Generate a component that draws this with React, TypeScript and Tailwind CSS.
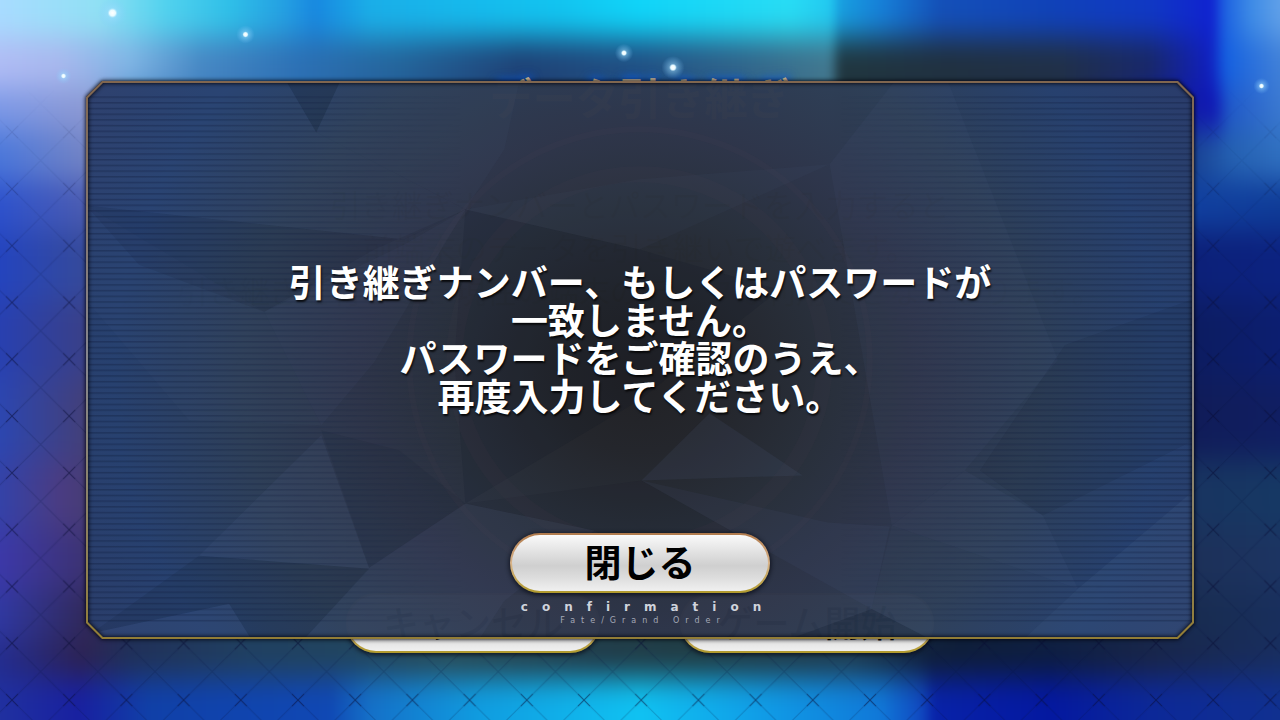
import React from "react";

type Band = { y: number; h: number; stops: [number, string][] };

const bands: Band[] = [
  { y: -60, h: 98, stops: [[0, "#a8dcff"], [100, "#90e0f4"], [165, "#52d2ee"], [230, "#2fbfe8"], [285, "#249fe2"], [315, "#1888e0"], [370, "#1aaee8"], [560, "#12c4f0"], [640, "#10d4f8"], [790, "#28dcf4"], [832, "#22c8f0"], [838, "#18a0e0"], [880, "#1680d8"], [940, "#1450b8"], [1050, "#1042b8"], [1150, "#1038c4"], [1212, "#1022d0"], [1224, "#1c60e0"], [1250, "#3c8ae6"], [1280, "#60a0e8"]] },
  { y: 38, h: 50, stops: [[0, "#b0bcf4"], [60, "#a8b8ee"], [130, "#80b4e4"], [200, "#4888c4"], [300, "#2c70b4"], [400, "#24649a"], [520, "#1e4276"], [640, "#205084"], [740, "#30648a"], [830, "#42788f"], [840, "#20363f"], [950, "#203040"], [1060, "#203048"], [1150, "#182868"], [1210, "#1020c0"], [1226, "#1460e0"], [1280, "#4080d8"]] },
  { y: 88, h: 42, stops: [[0, "#7c98e6"], [90, "#8c98d2"], [130, "#4888c4"], [300, "#2c70b4"], [520, "#1e4276"], [740, "#30648a"], [830, "#42788f"], [840, "#20363f"], [1060, "#203048"], [1190, "#1018a8"], [1214, "#1018b4"], [1230, "#2058c8"], [1280, "#3a78d0"]] },
  { y: 130, h: 50, stops: [[0, "#4c78da"], [90, "#7484c4"], [1190, "#184090"], [1230, "#2460b0"], [1280, "#3070c0"]] },
  { y: 180, h: 50, stops: [[0, "#2e52cc"], [90, "#4c5cb0"], [1190, "#1040a0"], [1280, "#0f3c98"]] },
  { y: 230, h: 70, stops: [[0, "#2444be"], [90, "#364a98"], [1190, "#0c2078"], [1280, "#0c2280"]] },
  { y: 300, h: 80, stops: [[0, "#2840b0"], [90, "#3a4086"], [1190, "#0c1c60"], [1280, "#0c1e70"]] },
  { y: 380, h: 80, stops: [[0, "#2c46b0"], [90, "#443f76"], [1190, "#101c58"], [1280, "#101e62"]] },
  { y: 460, h: 70, stops: [[0, "#3442a8"], [60, "#4a3c82"], [90, "#463c74"], [1190, "#183460"], [1280, "#163864"]] },
  { y: 530, h: 60, stops: [[0, "#3c38a8"], [90, "#3c3270"], [1190, "#1c3058"], [1280, "#1c3462"]] },
  { y: 590, h: 50, stops: [[0, "#3038a0"], [90, "#302858"], [130, "#203058"], [250, "#204060"], [450, "#284c58"], [700, "#203c44"], [850, "#1f3c50"], [960, "#0f1e38"], [1190, "#182c50"], [1280, "#182e5c"]] },
  { y: 640, h: 38, stops: [[0, "#242c8c"], [80, "#2c2252"], [130, "#203058"], [250, "#204060"], [350, "#204460"], [450, "#284c58"], [600, "#203a48"], [700, "#203c44"], [850, "#1f3c50"], [930, "#0f1e38"], [1050, "#0c1c40"], [1150, "#182448"], [1280, "#182e60"]] },
  { y: 678, h: 100, stops: [[0, "#2030a0"], [80, "#1820a0"], [150, "#1040a8"], [330, "#1048b4"], [370, "#1470c8"], [480, "#109ce0"], [640, "#10c2f2"], [750, "#10a0e8"], [880, "#1078d8"], [922, "#1048c0"], [934, "#0822a8"], [1050, "#0418a0"], [1150, "#0c2898"], [1280, "#103090"]] },
];

const sparkles: [number, number, number][] = [
  [112.5, 13, 13],
  [245.5, 34.5, 8],
  [63.5, 76, 7],
  [624, 53, 8],
  [673, 67.5, 10],
  [1261.5, 86, 7],
];

function Backdrop() {
  return (
    <svg
      aria-hidden="true"
      className="absolute inset-0 h-full w-full"
      viewBox="0 0 1280 720"
      preserveAspectRatio="xMidYMid slice"
    >
      <defs>
        {bands.map((b, i) => (
          <linearGradient key={i} id={`band${i}`} gradientUnits="userSpaceOnUse" x1="0" x2="1280" y1="0" y2="0">
            {b.stops.map(([x, c]) => (
              <stop key={x} offset={x / 1280} stopColor={c} />
            ))}
          </linearGradient>
        ))}
        <filter id="soften" x="-10%" y="-10%" width="120%" height="120%" colorInterpolationFilters="sRGB">
          <feGaussianBlur stdDeviation="5 15" />
        </filter>
        <pattern id="lattice" width="57.2" height="56.8" x="12" y="18.5" patternUnits="userSpaceOnUse">
          <path d="M0 0L57.2 56.8M57.2 0L0 56.8" stroke="#06103a" strokeOpacity=".2" strokeWidth="1" />
          <path
            d="M0 0L6 6M57.2 0L51.2 6M0 56.8L6 50.8M57.2 56.8L51.2 50.8"
            stroke="#060a30"
            strokeOpacity=".42"
            strokeWidth="1"
          />
        </pattern>
        <linearGradient id="latticeFade" x1="0" y1="0" x2="0" y2="1">
          <stop offset=".12" stopColor="#000" />
          <stop offset=".45" stopColor="#fff" />
        </linearGradient>
        <mask id="latticeMask">
          <rect width="1280" height="720" fill="url(#latticeFade)" />
        </mask>
        <radialGradient id="spark">
          <stop offset="0" stopColor="#fff" />
          <stop offset=".2" stopColor="#e8fbff" />
          <stop offset=".34" stopColor="#9fdcff" stopOpacity=".45" />
          <stop offset="1" stopColor="#7fc8ff" stopOpacity="0" />
        </radialGradient>
      </defs>
      <g filter="url(#soften)">
        {bands.map((b, i) => (
          <rect key={i} x="-60" y={b.y} width="1400" height={b.h + 1} fill={`url(#band${i})`} />
        ))}
      </g>
      <rect width="1280" height="720" fill="url(#lattice)" mask="url(#latticeMask)" />
      {sparkles.map(([x, y, r]) => (
        <circle key={x} cx={x} cy={y} r={r * 1.15} fill="url(#spark)" />
      ))}
    </svg>
  );
}

const cut =
  "[clip-path:polygon(16px_0,calc(100%-16px)_0,100%_16px,100%_calc(100%-16px),calc(100%-16px)_100%,16px_100%,0_calc(100%-16px),0_16px)]";

function PanelArt() {
  return (
    <svg
      aria-hidden="true"
      className={`absolute inset-0 h-full w-full ${cut}`}
      viewBox="87 82 1107 556"
      preserveAspectRatio="none"
    >
      <defs>
        <radialGradient id="base" gradientUnits="userSpaceOnUse" cx="0" cy="0" r="1" gradientTransform="translate(640 375) scale(640 560)">
          <stop offset="0" stopColor="#212123" />
          <stop offset=".14" stopColor="#24262b" />
          <stop offset=".3" stopColor="#29303b" />
          <stop offset=".44" stopColor="#2e3549" />
          <stop offset=".62" stopColor="#2e3f57" />
          <stop offset=".82" stopColor="#27416f" />
          <stop offset="1" stopColor="#2b3d6a" />
        </radialGradient>
        <pattern id="scan" width="8" height="5.67" y="86" patternUnits="userSpaceOnUse">
          <rect width="8" height="1.5" fill="#101a3c" fillOpacity=".34" />
        </pattern>
        <linearGradient id="scanFade" x1="0" x2="1" y1="0" y2="0">
          <stop offset="0" stopColor="#fff" />
          <stop offset=".2" stopColor="#aaa" />
          <stop offset=".34" stopColor="#000" />
          <stop offset=".68" stopColor="#000" />
          <stop offset=".82" stopColor="#aaa" />
          <stop offset="1" stopColor="#fff" />
        </linearGradient>
        <mask id="scanMask">
          <rect x="87" y="94" width="1107" height="530" fill="url(#scanFade)" />
        </mask>
      </defs>
      <rect x="87" y="82" width="1107" height="556" fill="url(#base)" fillOpacity=".98" />
      <g fill="#6078a4">
        <path d="M341 82H520L505 150L466 210L317 133Z" fillOpacity=".05" />
        <path d="M87 82H287L317 133L466 210L405 240L87 206Z" fillOpacity=".05" />
        <path d="M466 210L640 180L830 165L640 250Z" fillOpacity=".05" />
        <path d="M466 210L375 362L322 425L265 312L405 245Z" fillOpacity=".06" />
        <path d="M895 82H948L1058 360L965 470L892 525L830 165Z" fillOpacity=".06" />
        <path d="M322 435L200 555L370 568Z" fillOpacity=".1" />
        <path d="M322 425L265 312L87 206V300L190 420Z" fillOpacity=".05" />
        <path d="M370 567L466 503L595 530L505 600L480 638H305Z" fillOpacity=".08" />
        <path d="M93 632L230 603L252 638H100Z" fillOpacity=".1" />
        <path d="M710 413L642 480L803 475Z" fillOpacity=".1" />
        <path d="M642 480L828 522L890 526L872 608L740 535Z" fillOpacity=".07" />
        <path d="M965 470L1043 515L1078 588L892 525Z" fillOpacity=".08" />
        <path d="M1194 490L1078 588L1024 638H1194Z" fillOpacity=".13" />
        <path d="M892 525L1078 588L1024 638H930L872 608Z" fillOpacity=".05" />
      </g>
      <g fill="#07111f">
        <path d="M287 82H341L317 133Z" fillOpacity=".16" />
        <path d="M87 206L405 240L466 210L375 250L265 312L140 265Z" fillOpacity=".08" />
        <path d="M466 210L640 250L780 290L640 400L466 503L455 360Z" fillOpacity=".12" />
        <path d="M200 555L370 568L305 638L252 638L230 603L93 632Z" fillOpacity=".1" />
        <path d="M1194 299L1065 345L980 470L1043 515L1194 440Z" fillOpacity=".08" />
        <path d="M872 608L790 638H930Z" fillOpacity=".18" />
        <path d="M322 430L370 567L466 503L400 450Z" fillOpacity=".07" />
        <path d="M642 480L740 535L640 560L595 530L466 503Z" fillOpacity=".08" />
      </g>
      <g fill="none" stroke="#7a4a5c" strokeOpacity=".05">
        <circle cx="640" cy="360" r="185" strokeWidth="16" />
        <circle cx="640" cy="360" r="230" strokeWidth="6" />
      </g>
      <rect x="87" y="82" width="1107" height="556" fill="url(#scan)" mask="url(#scanMask)" />
    </svg>
  );
}

function PanelFrame() {
  return (
    <div
      aria-hidden="true"
      className="absolute inset-0 [filter:drop-shadow(0_0_2px_rgba(0,0,10,0.9))_drop-shadow(0_0_1px_rgba(0,0,10,0.6))]"
    >
      <div className="h-full w-full bg-linear-to-b from-[#80664f] via-[#85868f] to-[#927d35] [clip-path:polygon(evenodd,16px_0,calc(100%-16px)_0,100%_16px,100%_calc(100%-16px),calc(100%-16px)_100%,16px_100%,0_calc(100%-16px),0_16px,16px_0,17px_2px,calc(100%-17px)_2px,calc(100%-2px)_17px,calc(100%-2px)_calc(100%-17px),calc(100%-17px)_calc(100%-2px),17px_calc(100%-2px),2px_calc(100%-17px),2px_17px,17px_2px)]" />
    </div>
  );
}

const pill =
  "rounded-full border-2 border-transparent text-black shadow-[0_1px_4px_1px_rgba(10,12,24,0.8)] [background:linear-gradient(#fafafa,#e6e6e6_25%,#cfcfcf_55%,#dcdcdc_75%,#f0f0f0)_padding-box,linear-gradient(#b07a4c,#d9b48a_50%,#b09a2c)_border-box]";

function TransferScreen() {
  return (
    <div aria-hidden="true" className="relative flex min-h-screen flex-col items-center pt-[74px] pb-[67px]">
      <h1 className="text-[43px] leading-[44px] font-bold whitespace-nowrap text-[#d8c09a] [text-shadow:0_0_8px_#0a58d8,0_0_12px_#0a58d8]">
        データ引き継ぎ
      </h1>
      <p className="mt-[64px] text-center text-[31px] leading-[43px] whitespace-nowrap text-black">
        引き継ぎナンバーとパスワードを入力すると
        <br />
        前端末のデータを引き継いで遊べます。
        <br />
        引き継ぎを行うと、現在の端末のデータは利用できなくなります。
      </p>
      <div className="mt-auto flex gap-20">
        <button type="button" tabIndex={-1} className={`h-[60px] w-[254px] pb-1 text-[36px] leading-[44px] font-medium ${pill}`}>
          キャンセル
        </button>
        <button type="button" tabIndex={-1} className={`h-[60px] w-[254px] pb-1 text-[36px] leading-[44px] font-medium ${pill}`}>
          ゲーム開始
        </button>
      </div>
    </div>
  );
}

function ConfirmDialog() {
  return (
    <div className="absolute inset-0 flex px-[86px] py-[81px]">
      <section
        role="dialog"
        aria-modal="true"
        aria-labelledby="message"
        className="relative flex flex-1 flex-col items-center"
      >
        <PanelArt />
        <PanelFrame />
        <div className="relative flex flex-1 items-center pt-[62px]">
          <p
            id="message"
            className="text-center text-[37px] leading-[38px] font-bold whitespace-nowrap text-white [text-shadow:1px_2px_2px_rgba(0,0,0,0.8)]"
          >
            引き継ぎナンバー、もしくはパスワードが
            <br />
            一致しません。
            <br />
            パスワードをご確認のうえ、
            <br />
            再度入力してください。
          </p>
        </div>
        <button type="button" className={`relative h-[60px] w-[260px] pb-1 text-[37px] leading-[52px] font-bold ${pill}`}>
          閉じる
        </button>
        <p className="relative mt-1.5 pl-4 font-[DejaVu_Sans,sans-serif] text-[12px] leading-4 font-bold tracking-[14px] text-[#cfd3dc]">
          confirmation
        </p>
        <p className="relative mb-3 pl-1.5 font-[DejaVu_Sans,sans-serif] text-[8px] leading-3 tracking-[6px] text-[#a4a9b6]">
          Fate/Grand Order
        </p>
      </section>
    </div>
  );
}

export default function App() {
  return (
    <main
      lang="ja"
      className="relative min-h-screen overflow-hidden bg-[#10204a] font-['Noto_Sans_CJK_JP',sans-serif]"
    >
      <Backdrop />
      <TransferScreen />
      <ConfirmDialog />
    </main>
  );
}
